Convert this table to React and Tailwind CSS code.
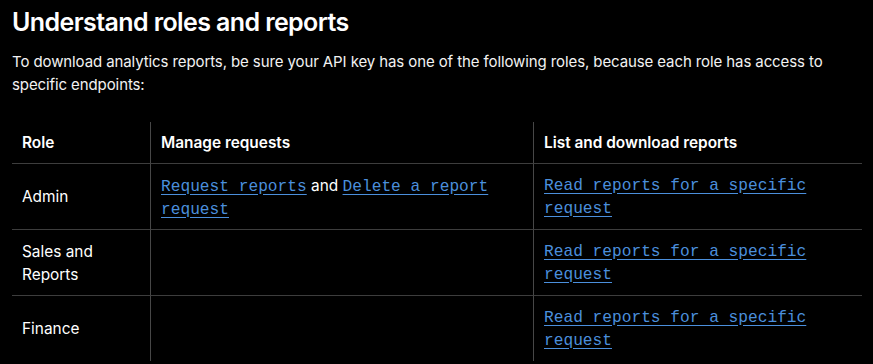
const linkClass = "text-[#4b8fdc] underline underline-offset-[3px]";
const monoCell =
  "font-['Liberation_Mono',monospace] text-[16.2px] leading-[23px] pt-[2px]";

const rows = [
  {
    role: "Admin",
    manage: (
      <>
        <a href="#" className={linkClass}>
          Request reports
        </a>
        <span className="font-['Inter',sans-serif] text-[15.4px]">{" and "}</span>
        <a href="#" className={linkClass}>
          Delete a report request
        </a>
      </>
    ),
  },
  { role: "Sales and Reports", manage: null },
  { role: "Finance", manage: null },
];

const App = () => {
  return (
    <div className="min-h-screen bg-black text-white font-['Inter',sans-serif] px-3 pt-[6px]">
      <h1 className="text-[25px] leading-[32px] font-semibold tracking-[-0.6px]">
        Understand roles and reports
      </h1>

      <p className="mt-3 max-w-[840px] text-[15px] leading-[23px] tracking-[-0.1px] text-[#f2f2f2]">
        To download analytics reports, be sure your API key has one of the
        following roles, because each role has access to specific endpoints:
      </p>

      <div className="mt-[26px] w-[850px] grid grid-cols-[138px_383px_329px] text-[15.4px] leading-[23px]">
        {/* Header */}
        <div className="h-[41px] flex items-center px-[10px] font-semibold">
          Role
        </div>
        <div className="h-[41px] flex items-center px-[10px] font-semibold border-l border-[#474747]">
          Manage requests
        </div>
        <div className="h-[41px] flex items-center px-[10px] font-semibold border-l border-[#474747]">
          List and download reports
        </div>

        {rows.map((row) => (
          <div key={row.role} className="contents">
            <div className="h-[66px] flex items-center px-[10px] border-t border-[#3d3d3d]">
              <span className="w-[100px]">{row.role}</span>
            </div>
            <div className="h-[66px] flex items-center px-[10px] border-t border-l border-[#3d3d3d] border-l-[#474747]">
              <div className={`w-[340px] ${monoCell}`}>{row.manage}</div>
            </div>
            <div className="h-[66px] flex items-center px-[10px] border-t border-l border-[#3d3d3d] border-l-[#474747]">
              <div className={`w-[280px] ${monoCell}`}>
                <a href="#" className={linkClass}>
                  Read reports for a specific request
                </a>
              </div>
            </div>
          </div>
        ))}
      </div>
    </div>
  );
};

export default App;
